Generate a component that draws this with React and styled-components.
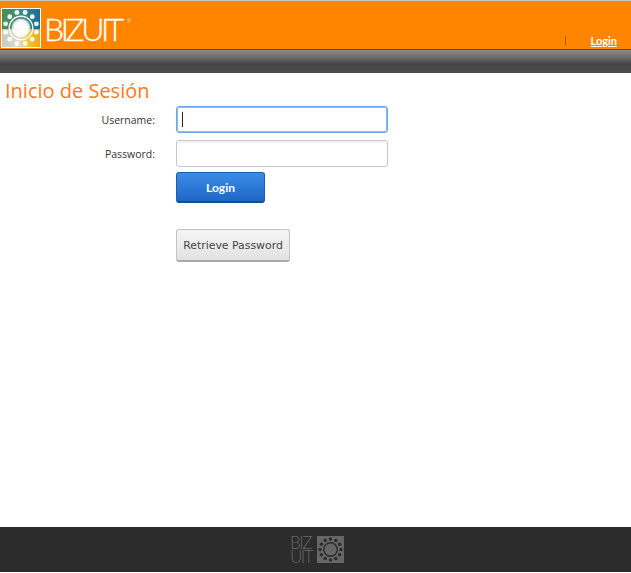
import React from 'react';
import styled, { createGlobalStyle } from 'styled-components';

const GlobalStyle = createGlobalStyle`
  html, body { margin: 0; padding: 0; background: #fff; }
  body { font-family: "Open Sans", "DejaVu Sans", sans-serif; }
`

const Page = styled.div`
  display: flex;
  flex-direction: column;
  height: 572px;
  overflow: hidden;
`
const Header = styled.header`
  height: 48px;
  display: flex;
  align-items: flex-start;
  background: #ff8500;
  border-top: 1px solid #c9c9c9;
  border-bottom: 1px solid #7a4210;
`
const LogoBox = styled.div`
  width: 38px;
  height: 38px;
  margin: 7px 0 0 1px;
  border: 1px solid #fff;
  flex: none;
`
const Brand = styled.span`
  margin: 8px 0 0 3px;
  color: #fff;
  font-family: "Lato", sans-serif;
  font-weight: 300;
  font-size: 32px;
  line-height: 40px;
  letter-spacing: -3.5px;
  -webkit-text-stroke: 0.3px #fff;
`
const Registered = styled.span`
  font-family: "Liberation Sans", sans-serif;
  font-size: 6px;
  line-height: 6px;
  margin: 17px 0 0 6px;
  color: #ffd9a8;
`
const HeaderLinks = styled.nav`
  margin-left: auto;
  margin-top: 33px;
  display: flex;
  align-items: center;
  padding-right: 14px;
`
const Divider = styled.span`
  width: 1px;
  height: 9px;
  background: #a8500a;
  margin-right: 24px;
`
const HeaderLink = styled.a`
  color: #fff;
  font-family: "Lato", sans-serif;
  font-size: 11px;
  font-weight: 700;
  text-decoration: underline;
`
const Band = styled.div`
  height: 23px;
  background: linear-gradient(#8b8b8b 0%, #6a6a6a 35%, #444 60%, #4c4c4c 100%);
`
const Main = styled.main`
  flex: 1;
  padding: 6px 0 0 5px;
`
const Title = styled.h1`
  margin: 0 0 3px;
  color: #ff7a1a;
  font-family: "Open Sans", sans-serif;
  font-weight: 400;
  font-size: 20px;
  line-height: 24px;
`
const Form = styled.form`
  display: grid;
  grid-template-columns: 150px 212px;
  column-gap: 21px;
  row-gap: 7px;
  align-items: center;
`
const Label = styled.label`
  color: #333;
  font-size: 10.5px;
  text-align: right;
`
const Input = styled.div`
  height: 27px;
  box-sizing: border-box;
  border-radius: 3px;
  background: #fff;
  border: 1px solid ${p => (p.$focused ? '#6ea5f0' : '#c8c8c8')};
  box-shadow: ${p => (p.$focused ? 'inset 0 0 0 1px #8fbcf7' : 'inset 0 2px 2px #f0f0f0')};
  display: flex;
  align-items: center;
  padding-left: 5px;
`
const Caret = styled.span`
  width: 1px;
  height: 15px;
  background: #222;
`
const Actions = styled.div`
  grid-column: 2;
  display: flex;
  flex-direction: column;
  align-items: flex-start;
  margin-top: -2px;
`
const LoginButton = styled.button`
  width: 89px;
  height: 31px;
  border: 1px solid #1b5da8;
  border-bottom: 2px solid #174d8c;
  border-radius: 3px;
  background: linear-gradient(#3a8ce8, #1e68c4);
  color: #fff;
  font-family: "Lato", sans-serif;
  font-weight: 700;
  font-size: 12px;
  padding: 0;
`
const RetrieveButton = styled.button`
  margin-top: 26px;
  width: 114px;
  height: 33px;
  border: 1px solid #c4c4c4;
  border-bottom: 2px solid #aaa;
  border-radius: 3px;
  background: linear-gradient(#f5f5f5, #e2e2e2);
  color: #444;
  font-family: "DejaVu Sans", sans-serif;
  font-size: 10.9px;
  padding: 0;
`
const Footer = styled.footer`
  height: 45px;
  background: #2c2c2c;
  display: flex;
  justify-content: center;
  align-items: center;
  gap: 3px;
  padding-left: 3px;
`
const FooterBrand = styled.span`
  color: #666;
  font-family: "Lato", sans-serif;
  font-weight: 300;
  font-size: 17px;
  line-height: 14px;
  letter-spacing: -1.5px;
  width: 24px;
`
const FooterMark = styled.div`
  background: #666;
`

const FooterSun = () => (
  <svg width="27" height="27" viewBox="0 0 100 100" style={{ display: 'block' }}>
    {Array.from({ length: 12 }, (_, i) => {
      const a = (i / 12) * Math.PI * 2
      return <circle key={i} cx={50 + Math.cos(a) * 39} cy={50 + Math.sin(a) * 39} r="6.5" fill="#2c2c2c" />
    })}
    <circle cx="50" cy="50" r="25" fill="none" stroke="#2c2c2c" strokeWidth="5" />
  </svg>
)

const ColorSun = () => (
  <svg width="38" height="38" viewBox="0 0 100 100" style={{ display: 'block' }}>
    <defs>
      <radialGradient id="glow" cx="0.5" cy="0.5" r="0.5">
        <stop offset="0" stopColor="#fff" />
        <stop offset="0.7" stopColor="#fff" />
        <stop offset="1" stopColor="#fff" stopOpacity="0.6" />
      </radialGradient>
      <linearGradient id="lowerBg" x1="0" y1="0" x2="1" y2="0">
        <stop offset="0" stopColor="#c9c9c9" />
        <stop offset="0.45" stopColor="#dcdcc8" />
        <stop offset="0.7" stopColor="#f3c52c" />
        <stop offset="1" stopColor="#efa91a" />
      </linearGradient>
      <linearGradient id="upperBg" x1="0" y1="0" x2="1" y2="0">
        <stop offset="0" stopColor="#4a8f58" />
        <stop offset="0.5" stopColor="#3d8a7e" />
        <stop offset="1" stopColor="#1c6c9a" />
      </linearGradient>
    </defs>
    <rect width="100" height="53" fill="url(#upperBg)" />
    <rect y="53" width="100" height="47" fill="url(#lowerBg)" />
    {Array.from({ length: 12 }, (_, i) => {
      const a = (i / 12) * Math.PI * 2 + Math.PI / 12
      return <circle key={i} cx={50 + Math.cos(a) * 42} cy={50 + Math.sin(a) * 42} r="6.5" fill="#fff" opacity="0.9" />
    })}
    <circle cx="50" cy="50" r="31" fill="none" stroke="#fff" strokeWidth="3.5" />
    <circle cx="50" cy="50" r="25" fill="url(#glow)" />
  </svg>
)

export default function App() {
  return (
    <Page>
      <GlobalStyle />
      <Header>
        <LogoBox><ColorSun /></LogoBox>
        <Brand>BIZUIT</Brand>
        <Registered>®</Registered>
        <HeaderLinks>
          <Divider />
          <HeaderLink href="#">Login</HeaderLink>
        </HeaderLinks>
      </Header>
      <Band />
      <Main>
        <Title>Inicio de Sesión</Title>
        <Form>
          <Label>Username:</Label>
          <Input $focused><Caret /></Input>
          <Label>Password:</Label>
          <Input />
          <Actions>
            <LoginButton type="button">Login</LoginButton>
            <RetrieveButton type="button">Retrieve Password</RetrieveButton>
          </Actions>
        </Form>
      </Main>
      <Footer>
        <FooterBrand>BIZ UIT</FooterBrand>
        <FooterMark><FooterSun /></FooterMark>
      </Footer>
    </Page>
  )
}
